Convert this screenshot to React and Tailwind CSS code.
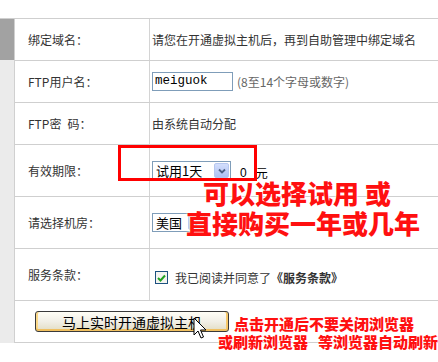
import React from 'react';

const font = { fontFamily: '"Noto Sans CJK SC", "Noto Sans", sans-serif' };

const Row = ({ label, h = 'h-[42px]', children }) => (
  <div className={`flex ${h} border-b border-[#cfcfcf]`}>
    <div className="w-[135px] shrink-0 border-r border-[#d4d4d4] flex items-center pl-[13px] text-[12px] text-[#333]">
      {label}
    </div>
    <div className="flex-1 flex items-center pl-[2px] text-[12px] text-[#333]">{children}</div>
  </div>
);

const SelectBox = ({ value, w }) => (
  <div className={`${w} h-[19px] border border-[#7f9db9] bg-white flex items-center justify-between pl-[3px] pr-px text-[13px] text-black`}>
    <span className="leading-none">{value}</span>
    <div className="w-[15px] h-[15px] rounded-[2px] bg-gradient-to-b from-[#d3defc] to-[#aec1f2] border border-[#b6c7ef] flex items-center justify-center">
      <svg width="8" height="6" viewBox="0 0 8 6">
        <path d="M1 1.5 L4 4.5 L7 1.5" fill="none" stroke="#4d6185" strokeWidth="1.8" />
      </svg>
    </div>
  </div>
);

export default function App() {
  return (
    <div className="relative w-[438px] h-[362px] bg-white overflow-hidden" style={font}>
      <div className="pt-[18px]">
        <div className="flex border-t border-[#cfcfcf]">
          <div className="w-[15px] shrink-0 bg-[#ebebeb] border-r border-[#d0d0d0] flex flex-col">
            <div className="h-[41px] bg-[#a2a2a2]" />
          </div>
          <div className="flex-1 flex flex-col">
            <Row label="绑定域名：">
              <span>请您在开通虚拟主机后，再到自助管理中绑定域名</span>
            </Row>
            <Row label="FTP用户名：">
              <div className="w-[81px] h-[19px] border border-[#7f9db9] flex items-center pl-[2px] text-[12.5px] text-black" style={{ fontFamily: '"Liberation Mono", monospace' }}>
                meiguok
              </div>
              <span className="ml-[4px] text-[#666]">(8至14个字母或数字)</span>
            </Row>
            <Row label={'FTP密\u2002码：'}>
              <span>由系统自动分配</span>
            </Row>
            <Row label="有效期限：" h="h-[52px]">
              <SelectBox value="试用1天" w="w-[79px]" />
              <span className="ml-[9px] mt-[4px] text-[12px] text-black" style={{ fontFamily: '"Liberation Sans", sans-serif' }}>0</span>
              <span className="ml-[9px] mt-[4px] text-[12px] text-black">元</span>
            </Row>
            <Row label="请选择机房：" h="h-[52px]">
              <SelectBox value="美国" w="w-[53px]" />
            </Row>
            <Row label="服务条款：" h="h-[52px]">
              <div className="flex items-center pt-[6px] pl-[3px]">
                <div className="w-[13px] h-[13px] border border-[#1c5180] bg-[#f4f4f0] flex items-center justify-center">
                  <svg width="9" height="8" viewBox="0 0 9 8">
                    <path d="M1 4 L3.5 6.5 L8 1.5" fill="none" stroke="#21a121" strokeWidth="2" />
                  </svg>
                </div>
                <span className="ml-[7px]">我已阅读并同意了<b className="font-bold">《服务条款》</b></span>
              </div>
            </Row>
            <div className="h-[42px] border-b border-[#cfcfcf] flex items-center pl-[20px]">
              <button className="w-[194px] h-[21px] rounded-[3px] border border-[#3a3a3a] bg-gradient-to-b from-[#fffef6] via-[#f1efe6] to-[#e2ddc4] shadow-[inset_0_-2px_0_#f0c060,inset_2px_0_0_#fbd98a,inset_-2px_0_0_#f7c96b] text-[14px] text-black leading-none">
                马上实时开通虚拟主机
              </button>
            </div>
          </div>
        </div>
      </div>

      {/* red highlight box */}
      <div className="absolute left-[118px] top-[145px] w-[139px] h-[36px] border-[3px] border-[#ff0000]" />

      {/* annotation text */}
      <div className="absolute left-[186px] top-[178px] text-[26px] font-black text-[#ff1010] leading-[30px] [text-shadow:0_0_2px_#fff,0_0_2px_#fff]">
        <div className="pl-[17px]">可以选择试用 或</div>
        <div>直接购买一年或几年</div>
      </div>
      <div className="absolute left-[218px] top-[315px] text-[15px] font-black text-[#ff1010] leading-[18px] [text-shadow:0_0_2px_#fff,0_0_2px_#fff] whitespace-nowrap">
        <div className="pl-[16px]">点击开通后不要关闭浏览器</div>
        <div>或刷新浏览器<span className="inline-block w-[10px]" />等浏览器自动刷新</div>
      </div>

      {/* mouse cursor */}
      <svg className="absolute left-[193px] top-[317px]" width="14" height="24" viewBox="0 0 14 24">
        <path d="M1 1 L1 18 L5 14 L8 21 L10.5 20 L7.5 13 L13 13 Z" fill="#fff" stroke="#000" strokeWidth="1" strokeLinejoin="miter" />
      </svg>
    </div>
  );
}
